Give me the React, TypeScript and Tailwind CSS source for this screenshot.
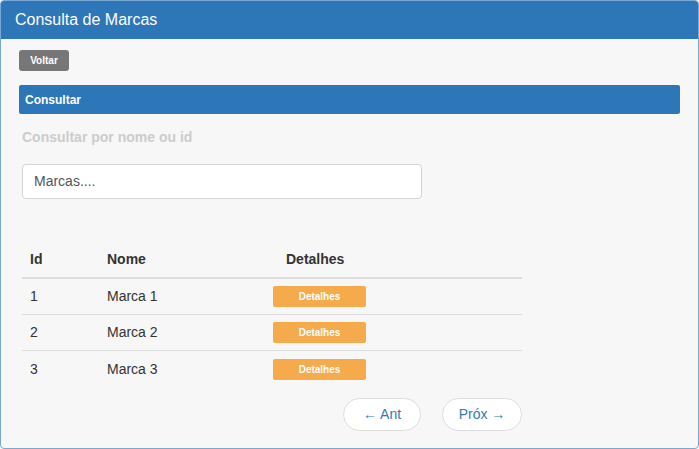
import React from "react";

const rows = [
  { id: 1, nome: "Marca 1" },
  { id: 2, nome: "Marca 2" },
  { id: 3, nome: "Marca 3" },
];

export default function App() {
  return (
    <div
      className="w-[699px] h-[449px] bg-[#f7f7f7] border border-[#79a8d6] rounded-[4px] overflow-hidden flex flex-col"
      style={{ fontFamily: '"Liberation Sans", Arial, sans-serif' }}
    >
      <div className="h-[39px] shrink-0 bg-[#2d76b7] text-white text-[16px] px-[15px] flex items-center -mx-px -mt-px">
        Consulta de Marcas
      </div>
      <div className="px-[18px] pt-[11px]">
        <button className="h-[21px] w-[50px] bg-[#777777] text-white text-[10px] font-bold rounded-[3px] flex items-center justify-center">
          Voltar
        </button>
        <div className="mt-[14px] h-[29px] bg-[#2d76b7] rounded-[2px] text-white text-[12px] font-bold px-[6px] flex items-center">
          Consultar
        </div>
        <div className="mt-[13px] ml-[3px] text-[14px] leading-[20px] font-bold text-[#cccccc]">
          Consultar por nome ou id
        </div>
        <div className="mt-[17px] ml-[3px] w-[400px] h-[35px] bg-white border border-[#d4d4d4] rounded-[4px] px-[11px] flex items-center text-[14px] text-[#555555]">
          Marcas....
        </div>
        <div className="ml-[3px] mt-[43px] w-[500px]">
          <div className="flex h-[37px] items-center border-b-2 border-[#dddddd] text-[14px] font-bold text-[#333333]">
            <div className="w-[77px] pl-[8px]">Id</div>
            <div className="w-[166px] pl-[8px]">Nome</div>
            <div className="pl-[21px]">Detalhes</div>
          </div>
          {rows.map((r, i) => (
            <div
              key={r.id}
              className={
                "flex h-[36px] items-center text-[14px] text-[#333333] " +
                (i < rows.length - 1 ? "border-b border-[#dddddd]" : "")
              }
            >
              <div className="w-[77px] pl-[8px]">{r.id}</div>
              <div className="w-[166px] pl-[8px]">{r.nome}</div>
              <div className="pl-[8px]">
                <button className="w-[93px] h-[21px] bg-[#f5ab4b] rounded-[2px] text-white text-[10px] font-bold flex items-center justify-center">
                  Detalhes
                </button>
              </div>
            </div>
          ))}
          <div className="mt-[11px] flex justify-end gap-[21px]">
            <button className="w-[78px] h-[33px] bg-white border border-[#dddddd] rounded-full text-[14px] text-[#337ab7] flex items-center justify-center">
              ← Ant
            </button>
            <button className="w-[80px] h-[33px] bg-white border border-[#dddddd] rounded-full text-[14px] text-[#337ab7] flex items-center justify-center">
              Próx →
            </button>
          </div>
        </div>
      </div>
    </div>
  );
}
